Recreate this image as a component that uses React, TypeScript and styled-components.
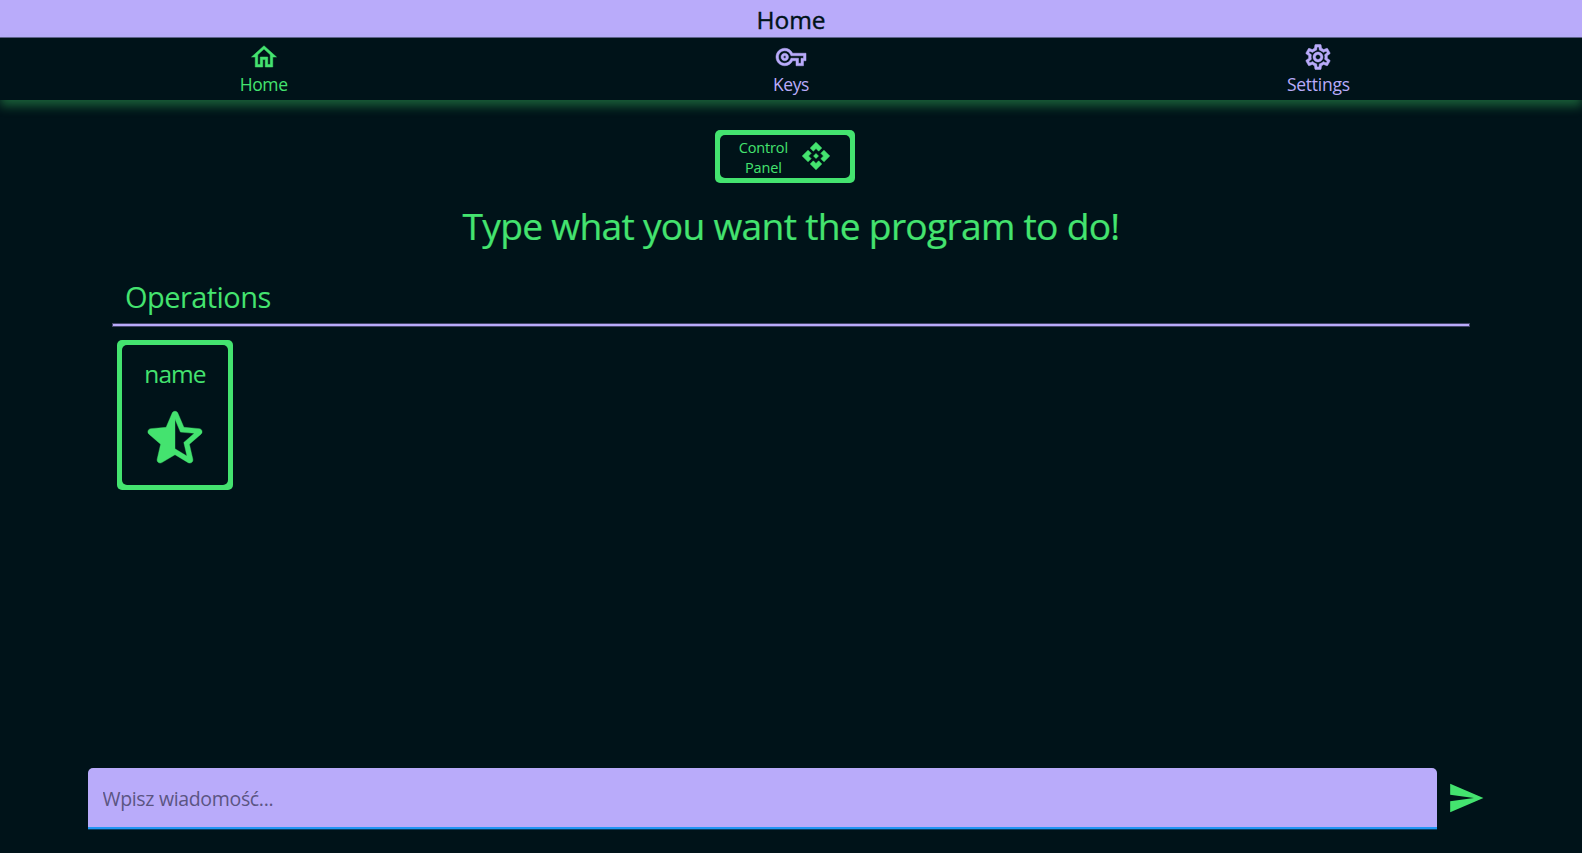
import React from 'react';
import styled, { createGlobalStyle } from 'styled-components';
import { MdOutlineHome, MdOutlineVpnKey, MdOutlineSettings, MdApi, MdSend } from 'react-icons/md';

const green = '#44e36f';
const purple = '#b9abfa';
const dark = '#001319';

const GlobalStyle = createGlobalStyle`
  *, *::before, *::after { box-sizing: border-box; }
  body {
    margin: 0;
    background: ${dark};
    color: ${green};
    font-family: 'Segoe UI', 'Open Sans', 'Noto Sans', sans-serif;
    overflow: hidden;
  }
  svg path[fill='none'] { stroke: none; }
`;

const Page = styled.div`
  height: 100vh;
  display: flex;
  flex-direction: column;
`;

const Label = styled.span<{ $size: number; $track?: number; $line?: number; $stroke?: number }>`
  font-size: ${(p) => p.$size}px;
  letter-spacing: ${(p) => p.$track ?? 0}px;
  line-height: ${(p) => (p.$line ? `${p.$line}px` : 1.3)};
  font-weight: 400;
  -webkit-text-stroke: ${(p) => p.$stroke ?? 0}px currentColor;
  white-space: nowrap;
`;

const TitleBar = styled.header`
  flex: none;
  height: 38px;
  display: flex;
  justify-content: center;
  padding-top: 3px;
  background: ${purple};
  border-bottom: 1px solid #5f5d8a;
  color: ${dark};
`;

const Nav = styled.nav`
  flex: none;
  height: 62px;
  display: grid;
  grid-template-columns: repeat(3, 1fr);
  background: ${dark};
  box-shadow: 0 6px 10px 0 rgba(68, 227, 111, 0.36);
`;

const NavItem = styled.a<{ $active?: boolean }>`
  display: flex;
  flex-direction: column;
  align-items: center;
  padding-top: 4px;
  color: ${(p) => (p.$active ? green : purple)};
  svg {
    display: block;
    width: 30px;
    height: 30px;
    margin-bottom: -1px;
    overflow: visible;
    stroke-width: 0.4;
  }
`;

const Main = styled.main`
  flex: 1;
  display: flex;
  flex-direction: column;
  padding: 30px 112px 0;
`;

const Frame = styled.button`
  display: flex;
  padding: 5px;
  border: 0;
  border-radius: 5px;
  background: ${green};
  color: ${green};
  font-family: inherit;
`;

const PanelFrame = styled(Frame)`
  align-self: center;
  width: 140px;
  height: 52.5px;
  margin-right: 12.5px;
`;

const PanelFace = styled.span`
  flex: 1;
  align-self: stretch;
  display: flex;
  align-items: center;
  justify-content: space-between;
  padding: 3px 19px 0 19px;
  border-radius: 5px;
  background: ${dark};
  text-align: center;
  svg {
    width: 30px;
    height: 30px;
    margin: -3px 0 0 0;
    overflow: visible;
    stroke-width: 0.45;
  }
`;

const Heading = styled.h1`
  margin: 16.5px 0 0;
  height: 55px;
  text-align: center;
  font-size: 0;
`;

const SectionTitle = styled.h2`
  margin: 0;
  padding: 23px 0 0 13px;
  height: 69px;
  font-size: 0;
`;

const Rule = styled.hr`
  width: 100%;
  height: 4px;
  margin: 0;
  border: 1px solid #444568;
  background: ${purple};
`;

const CardFrame = styled(Frame)`
  width: 115.5px;
  height: 150px;
  margin: 13px 0 0 5.25px;
`;

const CardFace = styled.span`
  flex: 1;
  align-self: stretch;
  display: flex;
  flex-direction: column;
  align-items: center;
  padding-top: 13px;
  border-radius: 5px;
  background: ${dark};
  svg { flex: none; width: 76px; height: 76px; margin-top: 9.5px; }
`;

const Composer = styled.form`
  flex: none;
  height: 85px;
  padding: 0 95px 0 87.5px;
  display: flex;
  align-items: flex-start;
  svg { flex: none; width: 38px; height: 38px; margin: 11px 0 0 10px; }
`;

const Field = styled.input`
  flex: none;
  width: 1349.5px;
  height: 61px;
  padding: 2px 15px 0;
  border: 0;
  border-bottom: 2px solid #2196f3;
  border-radius: 5px 5px 0 0;
  box-shadow: 0 1px 0 #0b3f63;
  outline: 0;
  background: ${purple};
  color: ${dark};
  font: 19.5px 'Segoe UI', 'Open Sans', 'Noto Sans', sans-serif;
  letter-spacing: -0.33px;
  &::placeholder { color: #5b5582; opacity: 1; }
`;

const StarHalf = () => (
  <svg viewBox="0 0 24 24" fill="currentColor" stroke="currentColor" strokeWidth="0.12">
    <path d="M19.65 9.04l-4.84-.42-1.89-4.45c-.34-.81-1.5-.81-1.84 0L9.19 8.63l-4.83.41c-.88.07-1.24 1.17-.57 1.75l3.67 3.18-1.1 4.72c-.2.86.73 1.54 1.49 1.08l4.15-2.5 4.15 2.51c.76.46 1.69-.22 1.49-1.08l-1.1-4.73 3.67-3.18c.67-.58.32-1.68-.56-1.75zM12 15.4V6.1l1.71 4.04 4.38.38-3.32 2.88 1 4.28L12 15.4z" />
  </svg>
);

export default function App() {
  return (
    <Page>
      <GlobalStyle />
      <TitleBar><Label $size={24.5} $stroke={0.4} $line={34}>Home</Label></TitleBar>
      <Nav>
        <NavItem $active><MdOutlineHome /><Label $size={17.5} $track={-0.4} $line={26}>Home</Label></NavItem>
        <NavItem><MdOutlineVpnKey /><Label $size={17.5} $track={-0.4} $line={26}>Keys</Label></NavItem>
        <NavItem><MdOutlineSettings /><Label $size={17.5} $track={-0.25} $line={26}>Settings</Label></NavItem>
      </Nav>
      <Main>
        <PanelFrame type="button">
          <PanelFace>
            <Label $size={14.5} $track={-0.15} $line={20}>Control<br />Panel</Label>
            <MdApi />
          </PanelFace>
        </PanelFrame>
        <Heading><Label $size={37.2} $track={-0.72} $stroke={0.2} $line={54}>Type what you want the program to do!</Label></Heading>
        <SectionTitle><Label $size={29} $track={-0.55} $line={40}>Operations</Label></SectionTitle>
        <Rule />
        <CardFrame type="button">
          <CardFace>
            <Label $size={24.5} $track={-0.9} $line={32}>name</Label>
            <StarHalf />
          </CardFace>
        </CardFrame>
      </Main>
      <Composer>
        <Field placeholder="Wpisz wiadomość..." />
        <MdSend color={green} />
      </Composer>
    </Page>
  );
}
